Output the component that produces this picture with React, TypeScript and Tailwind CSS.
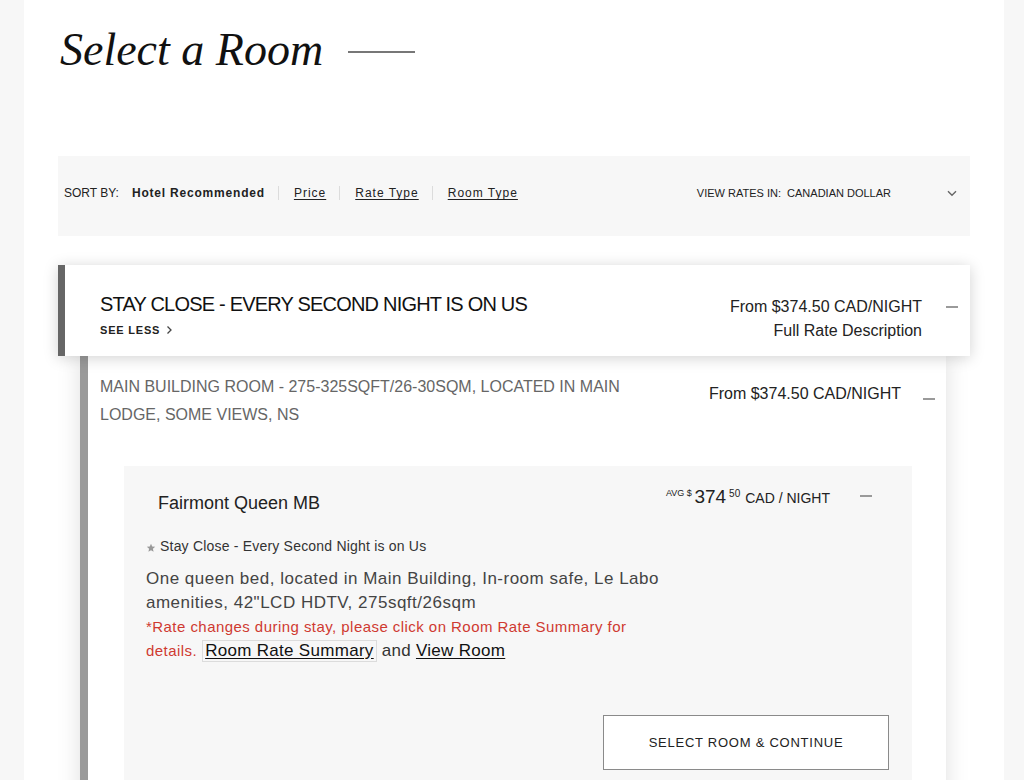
import React from "react";

function Minus({ className = "" }: { className?: string }) {
  return <div className={"w-[12px] h-[2px] bg-[#9a9a9a] shrink-0 " + className} />;
}

export default function App() {
  return (
    <div className="min-h-screen bg-[#f7f7f7] font-['Liberation_Sans',Arial,sans-serif] text-[#222]">
      <div className="ml-[24px] w-[980px] bg-white min-h-[1000px] px-[34px]">
        {/* Title */}
        <div className="pt-[22px] flex items-center gap-[25px]">
          <h1 className="ml-[2px] font-['Liberation_Serif',serif] italic text-[46px] leading-[56px] text-[#111]">
            Select a Room
          </h1>
          <div className="w-[67px] h-[2px] bg-[#777] mt-[4px]" />
        </div>

        {/* Sort bar */}
        <div className="mt-[78px] h-[80px] bg-[#f7f7f7] flex items-center justify-between pl-[6px] pr-[13px] pb-[6px]">
          <div className="flex items-center text-[12px] text-[#222]">
            <span>SORT BY:</span>
            <span className="ml-[13px] font-bold tracking-[0.8px]">Hotel Recommended</span>
            <span className="ml-[13px] mr-[15px] w-px h-[14px] bg-[#dcdcdc]" />
            <span className="underline underline-offset-2 tracking-[1px]">Price</span>
            <span className="ml-[13px] mr-[15px] w-px h-[14px] bg-[#dcdcdc]" />
            <span className="underline underline-offset-2 tracking-[1px]">Rate Type</span>
            <span className="ml-[13px] mr-[15px] w-px h-[14px] bg-[#dcdcdc]" />
            <span className="underline underline-offset-2 tracking-[1px]">Room Type</span>
          </div>
          <div className="flex items-center text-[11px] text-[#222]">
            <span className="whitespace-pre">VIEW RATES IN:  CANADIAN DOLLAR</span>
            <svg className="ml-[56px]" width="10" height="7" viewBox="0 0 10 7" fill="none">
              <path d="M1 1.2l4 4 4-4" stroke="#666" strokeWidth="1.4" />
            </svg>
          </div>
        </div>

        {/* Offer header card */}
        <div className="relative z-10 mt-[29px] h-[91px] bg-white border-l-[7px] border-[#666] shadow-[0_2px_14px_rgba(0,0,0,0.18)] flex justify-between pl-[35px] pr-[12px]">
          <div className="pt-[26px]">
            <div className="text-[20px] leading-[26px] tracking-[-0.8px] text-[#111]">
              STAY CLOSE - EVERY SECOND NIGHT IS ON US
            </div>
            <div className="mt-[6px] flex items-center text-[11px] leading-[14px] font-bold tracking-[0.8px] text-[#222]">
              SEE LESS
              <svg className="ml-[6px]" width="7" height="10" viewBox="0 0 7 10" fill="none">
                <path d="M1.5 1.5l3.5 3.5-3.5 3.5" stroke="#444" strokeWidth="1.3" />
              </svg>
            </div>
          </div>
          <div className="pt-[30px] flex gap-[24px]">
            <div className="text-right text-[16px] leading-[24px] text-[#222]">
              <div>From $374.50 CAD/NIGHT</div>
              <div>Full Rate Description</div>
            </div>
            <Minus className="mt-[11px]" />
          </div>
        </div>

        {/* Room card */}
        <div className="ml-[22px] mr-[24px] border-l-[8px] border-[#9a9a9a] bg-white shadow-[0_0_22px_rgba(0,0,0,0.13)] pl-[12px] pr-[11px] pt-[17px] pb-[60px]">
          <div className="flex justify-between">
            <div className="w-[560px] text-[16px] leading-[28px] text-[#666]">
              MAIN BUILDING ROOM - 275-325SQFT/26-30SQM, LOCATED IN MAIN LODGE, SOME VIEWS, NS
            </div>
            <div className="flex mt-[9px] gap-[22px]">
              <div className="text-[16px] leading-[24px] text-[#222]">From $374.50 CAD/NIGHT</div>
              <Minus className="mt-[16px]" />
            </div>
          </div>

          {/* Rate card */}
          <div className="mt-[37px] ml-[24px] mr-[23px] bg-[#f7f7f7] pl-[22px] pr-[23px] pt-[25px] pb-[60px]">
            <div className="flex justify-between items-start">
              <div className="ml-[12px] text-[18px] leading-[24px] text-[#222]">Fairmont Queen MB</div>
              <div className="flex items-center mr-[17px]">
                <div className="text-[#222] leading-[24px] whitespace-nowrap mt-[-10px]">
                  <span className="text-[9px] align-[7px]">AVG $ </span>
                  <span className="text-[19px]">374</span>
                  <span className="text-[10px] align-[6px] ml-[3px]">50</span>
                  <span className="text-[14px] ml-[5px]">CAD / NIGHT</span>
                </div>
                <Minus className="ml-[30px] mt-[-10px]" />
              </div>
            </div>

            <div className="mt-[21px] flex items-center text-[14px] leading-[20px] tracking-[0.2px] text-[#333]">
              <svg width="10" height="10" viewBox="0 0 24 24" className="mr-[4px] mt-[3px]">
                <path d="M12 2l2.9 6.6 7.1.6-5.4 4.7 1.6 7-6.2-3.7-6.2 3.7 1.6-7L2 9.2l7.1-.6z" fill="#999" />
              </svg>
              Stay Close - Every Second Night is on Us
            </div>

            <div className="mt-[11px] w-[525px] text-[17px] leading-[24px] text-[#444] tracking-[0.5px]">
              One queen bed, located in Main Building, In-room safe, Le Labo amenities, 42"LCD HDTV, 275sqft/26sqm
            </div>
            <div className="text-[15px] leading-[24px] text-[#cf3a31] tracking-[0.45px]">
              *Rate changes during stay, please click on Room Rate Summary for
            </div>
            <div className="flex items-center h-[23px]">
              <span className="text-[15px] leading-[20px] text-[#cf3a31] tracking-[0.45px]">details.</span>
              <span className="ml-[5px] leading-[20px] text-[17px] text-[#111] underline underline-offset-2 border border-[#dcdcdc] px-[2px] tracking-[0.3px]">
                Room Rate Summary
              </span>
              <span className="ml-[5px] leading-[20px] text-[17px] text-[#333] tracking-[0.3px]">and</span>
              <span className="ml-[5px] leading-[20px] text-[17px] text-[#111] underline underline-offset-2 tracking-[0.3px]">View Room</span>
            </div>

            <div className="mt-[53px] flex justify-end">
              <button className="w-[286px] h-[55px] bg-white border border-[#8a8a8a] text-[13px] tracking-[0.75px] text-[#222]">
                SELECT ROOM &amp; CONTINUE
              </button>
            </div>
          </div>
        </div>
      </div>
    </div>
  );
}
